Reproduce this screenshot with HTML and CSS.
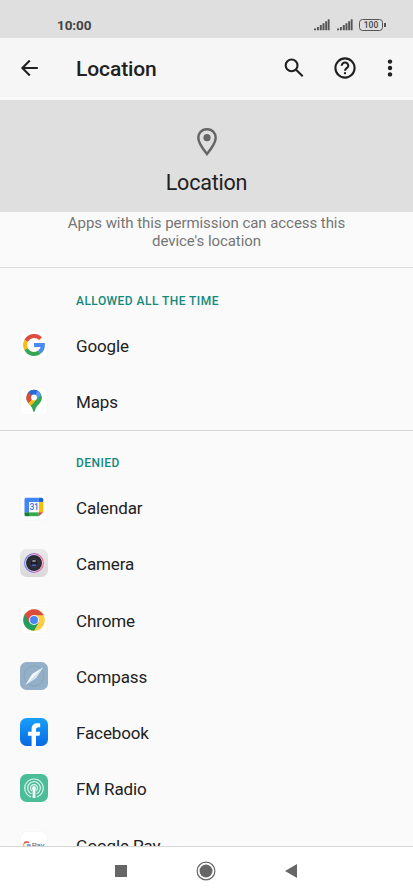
FILE: index.html
```html
<!DOCTYPE html>
<html lang="en">
<head>
    <meta charset="UTF-8">
    <meta name="viewport" content="width=device-width, initial-scale=1.0">
    <title>Location</title>
    <link rel="stylesheet" href="styles.css">
</head>
<body>
    <div class="phone">
        <div class="status-bar">
            <span class="time">10:00</span>
            <svg class="signal" width="16" height="12" viewBox="0 0 16 12"><path d="M0 9.5h2v1.8H0zM2.9 8h2v3.3h-2zM5.8 6h2v5.3h-2zM8.5 4.2h2v7.1h-2zM11.2 2.2h2v9.1h-2zM13.8 0.3h1.8v11h-1.8z"/></svg>
            <svg class="signal second" width="16" height="12" viewBox="0 0 16 12"><path d="M0 9.5h2v1.8H0zM2.9 8h2v3.3h-2zM5.8 6h2v5.3h-2zM8.5 4.2h2v7.1h-2zM11.2 2.2h2v9.1h-2zM13.8 0.3h1.8v11h-1.8z"/></svg>
            <div class="battery">100</div>
        </div>

        <header class="app-bar">
            <svg class="back" width="18" height="18" viewBox="0 0 18 18"><path d="M9.8 1.6L2.4 9l7.4 7.4M2.4 9H17.8"/></svg>
            <h1>Location</h1>
            <svg class="search" width="20" height="20" viewBox="0 0 20 20"><circle cx="7.6" cy="7.4" r="5.9"/><path d="M11.8 11.6l6.900 6.700"/></svg>
            <svg class="help" width="22" height="22" viewBox="0 0 22 22"><circle cx="11" cy="11" r="9.6"/><path d="M7.7 8.8a3.3 3.3 0 1 1 6.6 0c0 2.4-3.3 2.4-3.3 5"/><path d="M11 15.2v2"/></svg>
            <svg class="more" width="6" height="18" viewBox="0 0 6 18"><circle cx="3" cy="2.6" r="2.2"/><circle cx="3" cy="9" r="2.2"/><circle cx="3" cy="15.4" r="2.2"/></svg>
        </header>

        <div class="hero">
            <svg width="20" height="28" viewBox="0 0 20 28"><path d="M10 1.2C5 1.2 1.3 5 1.3 9.8 1.3 15 5.5 20.500 10 26c4.500-5.500 8.700-11 8.700-16.200C18.700 5 15 1.200 10 1.200z" fill="none" stroke="#666" stroke-width="2.500"/><circle cx="10" cy="9.700" r="3.600" fill="#666"/></svg>
            <h2>Location</h2>
        </div>

        <main class="content">
            <p class="summary">Apps with this permission can access this<br>device's location</p>

            <section class="group allowed">
                <h3>ALLOWED ALL THE TIME</h3>
                <div class="app">
                    <svg class="icon" viewBox="0 0 28 28">
                        <rect class="tile" x="0.5" y="0.5" width="27" height="27" rx="6"/>
                        <g fill="none" stroke-width="4">
                            <path d="M20.600 7.700A9 9 0 0 0 6.100 9.900" stroke="#df4b3e"/>
                            <path d="M6.100 9.900a9 9 0 0 0 0 8.200" stroke="#f9bc15"/>
                            <path d="M6.100 18.100a9 9 0 0 0 13.500 3" stroke="#36a656"/>
                            <path d="M19.600 21.100a9 9 0 0 0 3.300-7.200H14" stroke="#4a8af4"/>
                        </g>
                    </svg>
                    <span>Google</span>
                </div>
                <div class="app">
                    <svg class="icon" viewBox="0 0 28 28">
                        <clipPath id="pin"><path d="M14 2.800a7.700 7.700 0 0 0-7.700 7.700c0 3 1.400 4.700 3.300 7.100 1.700 2.200 2.900 3.800 3.500 6.400q.9 2 1.800 0c.6-2.600 1.800-4.200 3.500-6.400 1.900-2.400 3.300-4.100 3.300-7.100A7.700 7.700 0 0 0 14 2.800z"/></clipPath>
                        <rect class="tile" x="0.5" y="0.5" width="27" height="27" rx="6"/>
                        <g clip-path="url(#pin)">
                            <path d="M0 0h28v28H0z" fill="#36a656"/>
                            <path d="M14 10.500L4 20l5.700 0L17 12z" fill="#f9bc15"/>
                            <path d="M8.200 5.200l5.800 5.300-6.500 6.300H4V5z" fill="#df4b3e"/>
                            <path d="M8.200 5.300L14 10.500l6-7V1H8z" fill="#2b69d6"/>
                            <path d="M14 10.500l4-7.500 5 3-6 7z" fill="#5b98f5"/>
                            <path d="M22.500 6L16 13.500l2 5 5-3z" fill="#36a656"/>
                        </g>
                        <circle cx="14" cy="10.500" r="2.900" fill="#fff"/>
                    </svg>
                    <span>Maps</span>
                </div>
            </section>

            <section class="group denied">
                <h3>DENIED</h3>
                <div class="app">
                    <svg class="icon" viewBox="0 0 28 28">
                        <rect class="tile" x="0.5" y="0.5" width="27" height="27" rx="6"/>
                        <path d="M6 4.700h12.800v4.500H9v10H4.500V6.200A1.500 1.500 0 0 1 6 4.700z" fill="#4285f4"/>
                        <path d="M18.800 4.700h3a1.500 1.500 0 0 1 1.500 1.500v3h-4.500z" fill="#1967d2"/>
                        <path d="M18.800 9.200h4.500v10h-4.500z" fill="#fbbc04"/>
                        <path d="M9 19.200h9.800v4H9z" fill="#34a853"/>
                        <path d="M4.500 19.200H9v4H6a1.500 1.500 0 0 1-1.500-1.500z" fill="#188038"/>
                        <path d="M18.800 19.200h4.500l-4.500 4z" fill="#ea4335"/>
                        <path d="M9 9.200h9.800v10H9z" fill="#fff"/>
                        <text x="13.900" y="17.200" font-size="8.500" font-weight="500" letter-spacing="-.4" text-anchor="middle" fill="#2b72e0">31</text>
                    </svg>
                    <span>Calendar</span>
                </div>
                <div class="app">
                    <svg class="icon" viewBox="0 0 28 28">
                        <defs>
                            <linearGradient id="body" x2="0" y2="1"><stop stop-color="#e9e9ea"/><stop offset="1" stop-color="#d9d9dc"/></linearGradient>
                            <linearGradient id="ring"><stop stop-color="#6c8cf0"/><stop offset=".5" stop-color="#b36acb"/><stop offset="1" stop-color="#f36c91"/></linearGradient>
                        </defs>
                        <rect width="28" height="28" rx="6.500" fill="url(#body)"/>
                        <circle cx="14" cy="14" r="9.300" fill="#f2edf5" stroke="url(#ring)" stroke-width="1.300"/>
                        <circle cx="14" cy="14" r="8" fill="#292a34"/>
                        <circle cx="14" cy="14" r="4.300" fill="#1c1e2c" stroke="#454654" stroke-width=".7"/>
                        <ellipse cx="14" cy="12" rx="2" ry="1" fill="#92939f"/>
                        <ellipse cx="14" cy="16.200" rx="2.500" ry="1" fill="#4663ad"/>
                    </svg>
                    <span>Camera</span>
                </div>
                <div class="app">
                    <svg class="icon" viewBox="0 0 28 28">
                        <rect class="tile" x="0.5" y="0.5" width="27" height="27" rx="6"/>
                        <circle cx="14" cy="14" r="10.800" fill="#ffcd40"/>
                        <path d="M14 14L4.650 8.600A10.800 10.800 0 0 0 14 24.800l4.700-8.100z" fill="#1fa05e"/>
                        <path d="M14 14L9.300 16.700 4.650 8.600A10.800 10.800 0 0 1 23.350 8.600L23.700 9.300H14z" fill="#db4b3e"/>
                        <circle cx="14" cy="14" r="5.100" fill="#f1f1f1"/>
                        <circle cx="14" cy="14" r="4" fill="#4a86ee"/>
                    </svg>
                    <span>Chrome</span>
                </div>
                <div class="app">
                    <svg class="icon" viewBox="0 0 28 28">
                        <rect width="28" height="28" rx="6.500" fill="#93b0c8"/>
                        <circle cx="14" cy="14" r="10" fill="none" stroke="#809db6" stroke-width=".7"/>
                        <path d="M22.800 5.500L16 15.900 5.600 22.800 12.200 12.100z" fill="#f7fbfd"/>
                        <path d="M22.800 5.500L16 15.900 5.600 22.800z" fill="#d1e5ef"/>
                    </svg>
                    <span>Compass</span>
                </div>
                <div class="app">
                    <svg class="icon" viewBox="0 0 28 28">
                        <linearGradient id="fb" x2="0" y2="1"><stop stop-color="#18a0f8"/><stop offset="1" stop-color="#0869e5"/></linearGradient>
                        <rect width="28" height="28" rx="6.500" fill="url(#fb)"/>
                        <path d="M11.600 28V17.800H8v-4h3.600v-2.600c0-3.900 2.300-5.900 5.700-5.900 1.500 0 2.900.2 2.900.2v3.700h-1.700c-1.800 0-2.500 1-2.500 2.300v2.300h4.200l-.7 4H16V28z" fill="#fff"/>
                    </svg>
                    <span>Facebook</span>
                </div>
                <div class="app">
                    <svg class="icon" viewBox="0 0 28 28">
                        <rect width="28" height="28" rx="6.500" fill="#4cbd99"/>
                        <g fill="none" stroke="#dff5ed" stroke-width="1.200">
                            <path d="M11 22.900a9.200 9.200 0 1 1 6 0"/>
                            <path d="M11.500 19.800a6.300 6.300 0 1 1 5 0"/>
                            <path d="M12 16.900a3.500 3.500 0 1 1 4 0"/>
                        </g>
                        <path d="M12.600 14.200h2.800V24h-2.800z" fill="#fff"/>
                        <circle cx="14" cy="14" r="1.900" fill="#fff"/>
                    </svg>
                    <span>FM Radio</span>
                </div>
                <div class="app">
                    <svg class="icon" viewBox="0 0 28 28">
                        <rect class="tile" x="0.5" y="0.5" width="27" height="27" rx="6"/>
                        <g fill="none" stroke-width="1.500">
                            <path d="M9 11.800a3.200 3.200 0 0 0-5 .7" stroke="#df4b3e"/>
                            <path d="M4 12.500a3.200 3.200 0 0 0 0 3" stroke="#f9bc15"/>
                            <path d="M4 15.500a3.200 3.200 0 0 0 5 .7" stroke="#36a656"/>
                            <path d="M9 16.200a3.200 3.200 0 0 0 .9-2.200H6.800" stroke="#4a8af4"/>
                        </g>
                        <text x="11.800" y="17.200" font-size="8" letter-spacing="-.2" fill="#5f6368">Pay</text>
                    </svg>
                    <span>Google Pay</span>
                </div>
            </section>
        </main>

        <nav class="nav-bar">
            <svg width="12" height="12" viewBox="0 0 12 12"><path d="M0 0h12v12H0z"/></svg>
            <svg width="20" height="20" viewBox="0 0 20 20"><circle cx="10" cy="10" r="8.900" fill="none" stroke="#666" stroke-width="1.200"/><circle cx="10" cy="10" r="6.500"/></svg>
            <svg width="12" height="14" viewBox="0 0 12 14"><path d="M12 0v14L0 7z"/></svg>
        </nav>
    </div>
</body>
</html>
```
FILE: styles.css
```css
* {
    box-sizing: border-box;
}
body {
    margin: 0;
    font-family: Roboto, "Liberation Sans", sans-serif;
    background: #fafafa;
    color: #212121;
}
h1, h2, h3, p {
    margin: 0;
}
svg {
    display: block;
    flex: none;
}
.phone {
    display: flex;
    flex-direction: column;
    width: 413px;
    height: 896px;
    overflow: hidden;
}
.status-bar {
    display: flex;
    align-items: center;
    flex: none;
    height: 38px;
    padding: 12px 28px 0 57px;
    background: #dfdfdf;
}
.time {
    flex: 1;
    font-size: 13.500px;
    font-weight: 700;
    letter-spacing: -0.1px;
    color: #444;
}
.signal {
    fill: #555;
}
.signal.second {
    margin: 0 6px 0 7px;
}
.battery {
    position: relative;
    width: 24px;
    height: 12px;
    margin-right: 2px;
    border: 1.5px solid #555;
    border-radius: 3.5px;
    font-size: 8.500px;
    font-weight: 500;
    line-height: 10px;
    text-align: center;
    color: #444;
}
.battery::after {
    content: "";
    position: absolute;
    top: 3px;
    right: -4px;
    width: 2px;
    height: 4px;
    background: #555;
}
.app-bar {
    display: flex;
    align-items: center;
    flex: none;
    height: 62px;
    padding: 0 20px 0 20px;
    background: #f6f6f6;
    border-bottom: 3px solid #fafafa;
}
.app-bar svg {
    fill: none;
    stroke: #212121;
    stroke-width: 2.1;
}
.app-bar h1 {
    flex: 1;
    margin-left: 38px;
    padding-top: 2px;
    font-size: 21px;
    font-weight: 500;
    letter-spacing: -0.1px;
}
.app-bar .search {
    margin-right: 30px;
}
.app-bar .help {
    margin-right: 31px;
}
.app-bar .more {
    fill: #212121;
    stroke: none;
}
.hero {
    display: flex;
    flex-direction: column;
    align-items: center;
    flex: none;
    height: 112px;
    padding-top: 28px;
    background: #dfdfdf;
}
.hero h2 {
    margin-top: 14px;
    font-size: 21.500px;
    font-weight: 400;
    line-height: 26px;
    letter-spacing: -0.2px;
}
.content {
    flex: 1;
    min-height: 0;
    overflow: hidden;
}
.summary {
    height: 56px;
    padding-top: 3px;
    border-bottom: 1px solid #dedede;
    font-size: 15px;
    line-height: 17.500px;
    letter-spacing: -0.06px;
    text-align: center;
    color: #757575;
}
.group h3 {
    height: 49px;
    padding: 25px 0 0 76px;
    font-size: 12px;
    font-weight: 500;
    line-height: 17px;
    letter-spacing: 0.45px;
    color: #12897b;
}
.denied {
    border-top: 1px solid #d6d6d6;
}
.denied h3 {
    height: 48px;
    padding-top: 24px;
}
.app {
    display: flex;
    align-items: center;
    height: 56.250px;
    padding-left: 19.500px;
    font-size: 17px;
    letter-spacing: -0.12px;
}
.allowed {
    height: 162px;
}
.app span {
    margin-left: 28.500px;
    padding-top: 2px;
}
.icon {
    width: 28px;
    height: 28px;
}
.tile {
    fill: #fff;
    stroke: #f4f4f4;
    stroke-width: 0.6;
}
.nav-bar {
    display: flex;
    align-items: center;
    flex: none;
    height: 50px;
    padding: 0 0 2px 114.500px;
    border-top: 1px solid #d6d6d6;
    background: #fff;
}
.nav-bar svg {
    fill: #666;
}
.nav-bar svg:nth-child(2) {
    margin: 0 68.500px 0 69.500px;
}
```
